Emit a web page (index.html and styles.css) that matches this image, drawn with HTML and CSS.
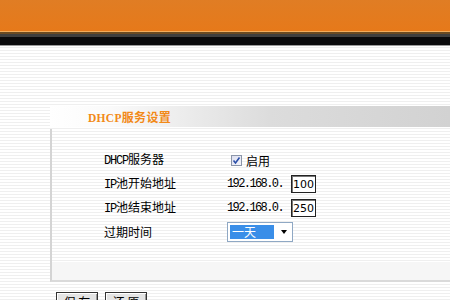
FILE: index.html
```html
<!DOCTYPE html>
<html lang="zh-CN">
<head>
<meta charset="utf-8">
<title>DHCP服务设置</title>
<link rel="stylesheet" href="styles.css">
</head>
<body>
<header class="topbar">
  <div class="orange"></div>
  <div class="edge-light"></div>
  <div class="edge-brown"></div>
  <div class="edge-gray"></div>
  <div class="edge-black"></div>
  <div class="edge-line"></div>
</header>
<main class="main">
  <div class="section-head"><span class="title"><span class="en-b">DHCP</span>服务设置</span></div>
  <div class="panel">
    <div class="form">
      <div class="row">
        <div class="label"><span class="en">DHCP</span>服务器</div>
        <div class="value"><span class="check"><svg width="9" height="9" viewBox="0 0 9 9"><path d="M1.5 4.5 L3.5 7 L7.5 1.5" fill="none" stroke="#2b4fa8" stroke-width="1.6"/></svg></span><span class="cn">启用</span></div>
      </div>
      <div class="row">
        <div class="label"><span class="en">IP</span>池开始地址</div>
        <div class="value"><span class="en ip">192.168.0.</span><span class="box">100</span></div>
      </div>
      <div class="row">
        <div class="label"><span class="en">IP</span>池结束地址</div>
        <div class="value"><span class="en ip">192.168.0.</span><span class="box">250</span></div>
      </div>
      <div class="row">
        <div class="label">过期时间</div>
        <div class="value"><span class="select"><span class="opt">一天</span><span class="arrow"></span></span></div>
      </div>
    </div>
    <div class="spacer"></div>
    <div class="foot"></div>
  </div>
  <div class="buttons">
    <button class="btn">保 存</button>
    <button class="btn">还 原</button>
  </div>
</main>
</body>
</html>
```

FILE: styles.css
```css
html, body {
  margin: 0;
  padding: 0;
}
body {
  width: 450px;
  height: 300px;
  overflow: hidden;
  font-family: "Noto Sans CJK SC", "DejaVu Sans", sans-serif;
  font-size: 12px;
  color: #000;
  background: repeating-linear-gradient(to bottom, #ffffff 0 2px, #efefef 2px 3px);
}
.topbar {
  display: flex;
  flex-direction: column;
}
.orange {
  height: 31px;
  background: linear-gradient(to bottom, #e07d24, #e6791a);
}
.edge-light { height: 1px; background: #f2ac5c; }
.edge-brown { height: 2px; background: #6a4a22; }
.edge-gray { height: 3px; background: #3e3e3e; }
.edge-black { height: 8px; background: #0a0a0c; }
.edge-line { height: 1px; background: #9a9a9a; }

.main {
  padding: 60px 0 0 50px;
  display: flex;
  flex-direction: column;
}
.section-head {
  height: 21px;
  display: flex;
  align-items: center;
  padding-left: 38px;
  background: linear-gradient(to right, #ffffff 0, #fafafa 15%, #dcdcdc 55%, #d2d2d2 100%);
}
.title {
  color: #f28a18;
  font-weight: bold;
  font-size: 12px;
  letter-spacing: 0.3px;
}
.en-b {
  font-family: "Liberation Serif", serif;
  font-weight: bold;
  font-size: 11.5px;
}
.panel {
  margin-top: 2px;
  border-left: 2px solid #d4d4d4;
  border-bottom: 2px solid #dadada;
  height: 151px;
  display: flex;
  flex-direction: column;
}
.form {
  padding: 19px 0 0 52px;
  display: flex;
  flex-direction: column;
}
.row {
  height: 24px;
  display: flex;
  align-items: center;
}
.label {
  width: 123px;
  line-height: 14px;
}
.en {
  font-family: "Liberation Mono", monospace;
  font-size: 12px;
  letter-spacing: -1.2px;
}
.value {
  display: flex;
  align-items: center;
}
.check {
  width: 11px;
  height: 11px;
  margin-left: 4px;
  margin-right: 4px;
  border: 1px solid #8b95a8;
  background: linear-gradient(135deg, #dcdff0, #f4f4fa);
  box-sizing: border-box;
  display: flex;
  align-items: center;
  justify-content: center;
}
.ip {
  width: 64px;
  letter-spacing: -1.6px;
}
.box {
  width: 25px;
  height: 18px;
  box-sizing: border-box;
  border: 1px solid #222;
  box-shadow: inset 1px 1px 0 #777;
  background: #fff;
  display: flex;
  align-items: center;
  justify-content: center;
  font-family: "DejaVu Sans", sans-serif;
  font-size: 11px;
}
.select {
  width: 66px;
  height: 20px;
  box-sizing: border-box;
  border: 1px solid #8fa8c4;
  background: #fff;
  display: flex;
  align-items: center;
  padding: 2px;
}
.opt {
  width: 44px;
  height: 14px;
  background: #3a8ee8;
  color: #fff;
  line-height: 14px;
  padding-left: 2px;
  box-sizing: border-box;
}
.arrow {
  margin-left: 7px;
  width: 0;
  height: 0;
  border-left: 3.5px solid transparent;
  border-right: 3.5px solid transparent;
  border-top: 4px solid #000;
}
.spacer {
  flex: 1;
}
.foot {
  height: 18px;
  background: #f6f6f6;
}
.buttons {
  display: flex;
  gap: 7px;
  margin: 10px 0 0 6px;
}
.btn {
  width: 42px;
  height: 20px;
  padding: 0;
  font-family: "Noto Sans CJK SC", sans-serif;
  font-size: 12px;
  line-height: 16px;
  color: #000;
  background: #e4e4e4;
  border: 1px solid #333;
  box-shadow: inset 1px 1px 0 #fff, inset -1px -1px 0 #999;
}
```
